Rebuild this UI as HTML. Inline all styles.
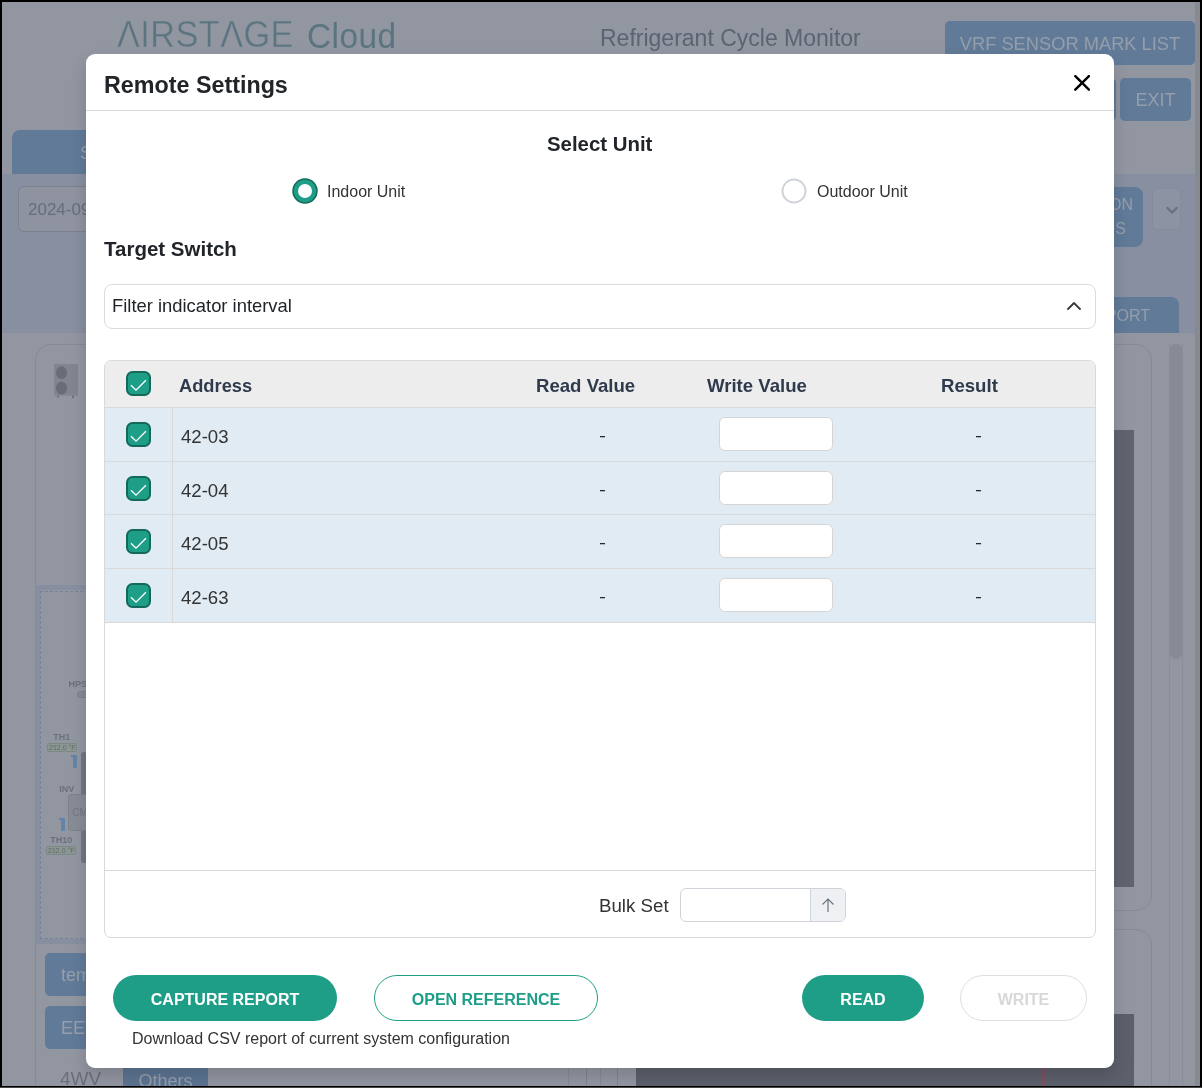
<!DOCTYPE html>
<html><head><meta charset="utf-8">
<style>
*{box-sizing:border-box;margin:0;padding:0}
body{-webkit-font-smoothing:antialiased}
#modal,#page{will-change:transform}
html,body{width:1202px;height:1088px;overflow:hidden;background:#000;font-family:"Liberation Sans",sans-serif}
.abs{position:absolute}
#page{position:absolute;left:2px;top:2px;width:1198px;height:1084px;background:#9196a1;overflow:hidden}
/* background elements (already tinted by overlay) */
.bbtn{position:absolute;background:#607a98;border-radius:5px;color:#959eab;font-size:18px;text-align:center;white-space:nowrap}
.logo{position:absolute;left:115px;top:14px;font-size:33px;color:#5b7580;white-space:nowrap;letter-spacing:0.5px;-webkit-text-stroke:0.45px #9196a1}
.title2{position:absolute;left:598px;top:22.5px;font-size:23px;color:#5c6372;white-space:nowrap}
#band{position:absolute;left:0;top:172px;width:1194px;height:159px;background:#878fa0}
#modal{position:absolute;left:86px;top:54px;width:1028px;height:1014px;background:#fff;border-radius:9px;overflow:hidden;box-shadow:0 8px 16px rgba(0,0,0,.15)}
.mh{position:absolute;left:0;top:0;width:100%;height:57px;border-bottom:1px solid #dadada}
.t{position:absolute;white-space:nowrap}
.radio{position:absolute;width:25px;height:25px;border-radius:50%}
.cb{position:absolute;width:25px;height:25px;border-radius:6px;background:#1e9e86;border:2px solid #13695a}
.cb svg{position:absolute;left:1px;top:1px}
#tbl{position:absolute;left:18px;top:306px;width:992px;height:578px;border:1px solid #d9d9d9;border-radius:7px;overflow:hidden}
.row{position:absolute;left:0;width:990px;background:#e0ebf3;border-bottom:1px solid #d9d9d9}
.wv{position:absolute;left:614px;width:114px;height:34px;background:#fff;border:1px solid #d5d5d5;border-radius:6px}
.dash{position:absolute;width:5px;height:1px;background:#2a2a2a;box-shadow:0 0.6px 0 rgba(40,40,40,.45)}
.hd{font-size:18px;font-weight:700;color:#2f3b4c}
.rv{font-size:18.6px;color:#333}
.pill{position:absolute;height:46px;border-radius:23px;font-size:16px;font-weight:700;text-align:center;line-height:50px;white-space:nowrap}
</style></head>
<body>
<div class="abs" style="left:0;top:1087px;width:1202px;height:1px;background:#474747"></div>
<div id="page">
  <!-- header -->
  <div class="logo" style="left:115px;top:12px;font-size:37px;transform:scaleX(0.925);transform-origin:0 0">&#923;IRST&#923;GE</div><div class="logo" style="left:305px;top:13.5px;font-size:35.5px;-webkit-text-stroke:0;transform:scaleX(0.94);transform-origin:0 0">Cloud</div>
  <div class="title2">Refrigerant Cycle Monitor</div>
  <div class="bbtn" style="left:943px;top:18.5px;width:250px;height:44px;line-height:45px;font-size:18.3px">VRF SENSOR MARK LIST</div>
  <div class="bbtn" style="left:1040px;top:76px;width:74px;height:43px"></div>
  <div class="bbtn" style="left:1118px;top:76px;width:71px;height:43px;line-height:45px">EXIT</div>
  <!-- tab -->
  <div class="bbtn" style="left:10px;top:128px;width:200px;height:46px;border-radius:8px 8px 0 0;line-height:46px;text-align:left;padding-left:68px">S</div>
  <div id="band"></div>
  <div class="abs" style="left:16px;top:184px;width:120px;height:46px;border:1px solid #7b818d;border-radius:6px;background:#8e939f;color:#676d7b;font-size:17px;line-height:46px;padding-left:9px">2024-09-01</div>
  <div class="bbtn" style="left:1060px;top:185px;width:81px;height:60px;border-radius:8px;font-size:16px;line-height:24px;padding-top:6px;text-align:right;padding-right:0"><span style="padding-right:10px">ON</span><br><span style="padding-right:17px">S</span></div>
  <div class="abs" style="left:1150px;top:186px;width:29px;height:42px;border:1px solid #858c9a;border-radius:5px;background:#8c93a2"></div><svg class="abs" style="left:1163px;top:202px" width="14" height="10" viewBox="0 0 14 10"><path d="M1.8 3.2l5.3 5.3 5.3-5.3" fill="none" stroke="#6a707c" stroke-width="2.2"/></svg>
  <div class="bbtn" style="left:1040px;top:295px;width:137px;height:36px;border-radius:8px 8px 0 0;font-size:16px;line-height:38px;text-align:right;padding-right:29px">REPORT</div>
  <!-- left panel -->
  <div class="abs" style="left:33px;top:342px;width:534px;height:760px;border:1px solid #858a95;border-radius:16px"></div>
  <svg class="abs" style="left:50px;top:359.5px" width="28" height="38" viewBox="0 0 28 38"><rect x="2" y="2" width="24" height="31.5" fill="#80858f"/><ellipse cx="9.5" cy="10.7" rx="5.5" ry="6.4" fill="#686d79"/><ellipse cx="9.5" cy="26.1" rx="5.5" ry="6.4" fill="#686d79"/><rect x="5" y="33.5" width="2" height="2" fill="#6d727c"/><rect x="20" y="33.5" width="2" height="2.5" fill="#6d727c"/></svg>
  <div class="abs" style="left:33px;top:583px;width:540px;height:359px;border:5.5px solid #878ea0;border-right:0"></div>
  <div class="abs" style="left:38px;top:588.5px;width:540px;height:348px;border:1px dashed #78819a"></div>
  <div class="t" style="left:66.5px;top:677.2px;font-size:9px;font-weight:700;color:#6b707b">HPS</div>
  <div class="abs" style="left:75.3px;top:688.6px;width:20px;height:7px;border-radius:4px;background:#858a96;border:1px solid #7b808b"></div>
  <div class="t" style="left:51.3px;top:729.6px;font-size:9px;font-weight:700;color:#6b707b">TH1</div>
  <div class="abs" style="left:45.3px;top:740.6px;width:30px;height:9px;border-radius:2px;background:#8b9793;border:1px solid #7e8986;font-size:7px;color:#5f6a66;line-height:8px;text-align:center;white-space:nowrap">212.0 °F</div>
  <div class="abs" style="left:71.3px;top:752.6px;width:4px;height:13px;background:#6384aa;border-radius:1px"></div><div class="abs" style="left:69.3px;top:752.6px;width:4px;height:2px;background:#6384aa"></div>
  <div class="abs" style="left:79.3px;top:749.6px;width:5px;height:42px;background:#72767f;border-radius:3px 0 0 0"></div>
  <div class="t" style="left:57.3px;top:781.6px;font-size:9px;font-weight:700;color:#6b707b">INV</div>
  <div class="abs" style="left:66.3px;top:791.6px;width:40px;height:37px;background:#878b95;border:1px solid #7c818b;border-radius:3px;font-size:10px;color:#71767f;line-height:35px;padding-left:3px">CMP</div>
  <div class="abs" style="left:59.3px;top:815.6px;width:4px;height:13px;background:#6384aa;border-radius:1px"></div><div class="abs" style="left:57.3px;top:815.6px;width:4px;height:2px;background:#6384aa"></div>
  <div class="abs" style="left:79.3px;top:828.6px;width:5px;height:32px;background:#72767f;border-radius:0 0 0 3px"></div>
  <div class="t" style="left:48.3px;top:832.6px;font-size:9px;font-weight:700;color:#6b707b">TH10</div>
  <div class="abs" style="left:44.3px;top:843.6px;width:30px;height:9px;border-radius:2px;background:#8b9793;border:1px solid #7e8986;font-size:7px;color:#5f6a66;line-height:8px;text-align:center;white-space:nowrap">212.0 °F</div>
  <!-- right panels -->
  <div class="abs" style="left:598px;top:342px;width:552px;height:567px;border:1px solid #858a95;border-radius:16px"></div>
  <div class="abs" style="left:1040px;top:428px;width:92px;height:457px;background:#5f6470"></div>
  <div class="abs" style="left:598px;top:927px;width:552px;height:300px;border:1px solid #858a95;border-radius:16px"></div><div class="abs" style="left:584px;top:1040px;width:1px;height:60px;background:#7f848f"></div><div class="abs" style="left:615px;top:1040px;width:1px;height:60px;background:#7f848f"></div>
  <div class="abs" style="left:633.5px;top:1012px;width:498.5px;height:80px;background:#5b606b"></div><div class="abs" style="left:1040.3px;top:1012px;width:2.4px;height:80px;background:#7a5264"></div>
  <div class="abs" style="left:1167px;top:342px;width:14px;height:315px;background:#868b96;border-radius:7px"></div>
  <div class="abs" style="left:1167px;top:342px;width:1px;height:742px;background:#898e99"></div>
  <div class="abs" style="left:1180px;top:342px;width:1px;height:742px;background:#898e99"></div>
  <div class="abs" style="left:1193px;top:0;width:5px;height:1084px;background:#878a90"></div>
  <!-- left bottom buttons -->
  <div class="bbtn" style="left:43px;top:951px;width:100px;height:43px;line-height:44px;text-align:left;padding-left:16px">temp</div>
  <div class="bbtn" style="left:43px;top:1004px;width:100px;height:43px;line-height:44px;text-align:left;padding-left:16px">EEV</div>
  <div class="t" style="left:58px;top:1066px;font-size:19px;color:#6a6f7a">4WV</div>
  <div class="bbtn" style="left:121px;top:1060px;width:85px;height:40px;border-radius:0;line-height:38px;padding-top:0;background:#5c7492">Others</div>
</div>

<div id="modal">
  <div class="mh"></div>
  <div class="t" style="left:18px;top:18px;font-size:23.3px;font-weight:700;color:#212529">Remote Settings</div>
  <svg class="abs" style="left:988px;top:20.5px" width="16" height="16" viewBox="0 0 16 16"><path d="M1.3 1.1L14.9 14.7M14.9 1.1L1.3 14.7" stroke="#000" stroke-width="2.4" stroke-linecap="round"/></svg>

  <div class="t" style="left:461px;top:79px;font-size:20.4px;font-weight:700;color:#212529">Select Unit</div>
  <svg class="abs" style="left:206px;top:124px" width="26" height="26" viewBox="0 0 26 26"><circle cx="13" cy="13" r="12" fill="#1e9e86" stroke="#13695a" stroke-width="1.5"/><circle cx="13" cy="13" r="7" fill="#fff"/></svg>
  <div class="t" style="left:241px;top:129px;font-size:16px;color:#333">Indoor Unit</div>
  <svg class="abs" style="left:695px;top:124px" width="26" height="26" viewBox="0 0 26 26"><circle cx="13" cy="13" r="11.5" fill="#fff" stroke="#cfd4db" stroke-width="2"/></svg>
  <div class="t" style="left:731px;top:129px;font-size:16px;color:#333">Outdoor Unit</div>

  <div class="t" style="left:18px;top:183px;font-size:20.5px;font-weight:700;color:#212529">Target Switch</div>
  <div class="abs" style="left:18px;top:230px;width:992px;height:45px;border:1px solid #dcdcdc;border-radius:8px"></div>
  <div class="t" style="left:26px;top:241px;font-size:18.4px;color:#212529">Filter indicator interval</div>
  <svg class="abs" style="left:980.2px;top:245.3px" width="16" height="12" viewBox="0 0 16 12"><path d="M2 10l6-6 6 6" fill="none" stroke="#343a40" stroke-width="1.8" stroke-linecap="round" stroke-linejoin="round"/></svg>

  <div id="tbl">
<div class="abs" style="left:0;top:0;width:990px;height:47px;background:#ededed;border-bottom:1px solid #d9d9d9"></div>
<svg class="abs" style="left:21px;top:10.3px" width="25" height="25" viewBox="0 0 25 25"><rect x="1" y="1" width="23" height="23" rx="5.5" fill="#1e9e86" stroke="#13695a" stroke-width="2"/><path d="M5 14.3L10 19.2L19.9 9.2" fill="none" stroke="#fff" stroke-width="1.3"/></svg>
<div class="t hd" style="left:74px;top:14.3px;font-size:18.3px">Address</div>
<div class="t hd" style="left:431px;top:13.8px;font-size:18.6px">Read Value</div>
<div class="t hd" style="left:602px;top:13.8px;font-size:18.6px">Write Value</div>
<div class="t hd" style="left:836px;top:13.8px;font-size:18.6px">Result</div>
<div class="row" style="top:47px;height:54px"></div>
<div class="row" style="top:100.67px;height:53.67px"></div>
<div class="row" style="top:154.33px;height:53.67px"></div>
<div class="row" style="top:208px;height:53.67px"></div>
<div class="abs" style="left:67px;top:47px;width:1px;height:214px;background:#d9d9d9"></div>
<svg class="abs" style="left:21px;top:61px" width="25" height="25" viewBox="0 0 25 25"><rect x="1" y="1" width="23" height="23" rx="5.5" fill="#1e9e86" stroke="#13695a" stroke-width="2"/><path d="M5 14.3L10 19.2L19.9 9.2" fill="none" stroke="#fff" stroke-width="1.3"/></svg>
<div class="t rv" style="left:76px;top:65px">42-03</div>
<div class="dash" style="left:495px;top:75px"></div>
<div class="wv" style="top:56px"></div>
<div class="dash" style="left:871px;top:75px"></div>
<svg class="abs" style="left:21px;top:115px" width="25" height="25" viewBox="0 0 25 25"><rect x="1" y="1" width="23" height="23" rx="5.5" fill="#1e9e86" stroke="#13695a" stroke-width="2"/><path d="M5 14.3L10 19.2L19.9 9.2" fill="none" stroke="#fff" stroke-width="1.3"/></svg>
<div class="t rv" style="left:76px;top:119px">42-04</div>
<div class="dash" style="left:495px;top:129px"></div>
<div class="wv" style="top:110px"></div>
<div class="dash" style="left:871px;top:129px"></div>
<svg class="abs" style="left:21px;top:168px" width="25" height="25" viewBox="0 0 25 25"><rect x="1" y="1" width="23" height="23" rx="5.5" fill="#1e9e86" stroke="#13695a" stroke-width="2"/><path d="M5 14.3L10 19.2L19.9 9.2" fill="none" stroke="#fff" stroke-width="1.3"/></svg>
<div class="t rv" style="left:76px;top:172px">42-05</div>
<div class="dash" style="left:495px;top:182px"></div>
<div class="wv" style="top:163px"></div>
<div class="dash" style="left:871px;top:182px"></div>
<svg class="abs" style="left:21px;top:222px" width="25" height="25" viewBox="0 0 25 25"><rect x="1" y="1" width="23" height="23" rx="5.5" fill="#1e9e86" stroke="#13695a" stroke-width="2"/><path d="M5 14.3L10 19.2L19.9 9.2" fill="none" stroke="#fff" stroke-width="1.3"/></svg>
<div class="t rv" style="left:76px;top:226px">42-63</div>
<div class="dash" style="left:495px;top:236px"></div>
<div class="wv" style="top:217px"></div>
<div class="dash" style="left:871px;top:236px"></div>
<div class="abs" style="left:0;top:509px;width:990px;height:1px;background:#d9d9d9"></div>
<div class="t" style="left:494px;top:534.3px;font-size:18.7px;color:#333">Bulk Set</div>
<div class="abs" style="left:575px;top:526.5px;width:165.5px;height:34px;border:1px solid #cfd4da;border-radius:6px;overflow:hidden"><div class="abs" style="left:129px;top:0;width:36px;height:32px;background:#eef0f3;border-left:1px solid #cfd4da"></div><svg class="abs" style="left:139px;top:8px" width="16" height="16" viewBox="0 0 16 16"><path d="M8 15V2M2.5 7.5L8 2l5.5 5.5" fill="none" stroke="#6b7280" stroke-width="1.2"/></svg></div>
  </div>

  <div class="pill" style="left:27px;top:921px;width:224px;background:#1e9e86;color:#fff">CAPTURE REPORT</div>
  <div class="pill" style="left:288px;top:921px;width:224px;border:1.3px solid #1e9e86;color:#1e9e86;line-height:48px">OPEN REFERENCE</div>
  <div class="t" style="left:46px;top:976px;font-size:16px;color:#333">Download CSV report of current system configuration</div>
  <div class="pill" style="left:716px;top:921px;width:122px;background:#1e9e86;color:#fff">READ</div>
  <div class="pill" style="left:874px;top:921px;width:127px;border:1px solid #dedede;color:#d8d8d8;line-height:48px">WRITE</div>
</div>
</body></html>
